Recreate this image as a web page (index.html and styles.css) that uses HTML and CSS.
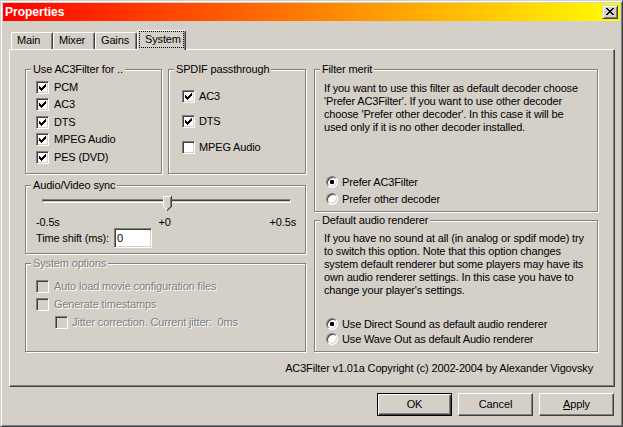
FILE: index.html
```html
<!DOCTYPE html>
<html>
<head>
<meta charset="utf-8">
<title>Properties</title>
<link rel="stylesheet" href="styles.css">
</head>
<body>
<div class="window">
  <div class="titlebar">
    <span class="title">Properties</span>
    <span class="close"><svg width="8" height="7" viewBox="0 0 8 7" shape-rendering="crispEdges"><path d="M0 0h2v1H0zM6 0h2v1H6zM1 1h2v1H1zM5 1h2v1H5zM2 2h4v1H2zM3 3h2v1H3zM2 4h4v1H2zM1 5h2v1H1zM5 5h2v1H5zM0 6h2v1H0zM6 6h2v1H6z"/></svg></span>
  </div>
  <div class="tabs">
    <div class="tab">Main</div>
    <div class="tab">Mixer</div>
    <div class="tab">Gains</div>
    <div class="tab sel"><span class="focus">System</span></div>
  </div>
  <div class="panel">
    <div class="cols">
      <div class="col col-left">
        <div class="row1">
          <div class="group g-use">
            <span class="legend">Use AC3Filter for ..</span>
            <div class="list list-use">
              <div class="check"><span class="cb"><svg width="7" height="7" viewBox="0 0 7 7" shape-rendering="crispEdges"><path d="M0 2v3h1v1h1v1h1v-1h1v-1h1v-1h1v-1h1v-3h-1v1h-1v1h-1v1h-1v1h-1v-1h-1v-1z"/></svg></span><span class="lbl">PCM</span></div>
              <div class="check"><span class="cb"><svg width="7" height="7" viewBox="0 0 7 7" shape-rendering="crispEdges"><path d="M0 2v3h1v1h1v1h1v-1h1v-1h1v-1h1v-1h1v-3h-1v1h-1v1h-1v1h-1v1h-1v-1h-1v-1z"/></svg></span><span class="lbl">AC3</span></div>
              <div class="check"><span class="cb"><svg width="7" height="7" viewBox="0 0 7 7" shape-rendering="crispEdges"><path d="M0 2v3h1v1h1v1h1v-1h1v-1h1v-1h1v-1h1v-3h-1v1h-1v1h-1v1h-1v1h-1v-1h-1v-1z"/></svg></span><span class="lbl">DTS</span></div>
              <div class="check"><span class="cb"><svg width="7" height="7" viewBox="0 0 7 7" shape-rendering="crispEdges"><path d="M0 2v3h1v1h1v1h1v-1h1v-1h1v-1h1v-1h1v-3h-1v1h-1v1h-1v1h-1v1h-1v-1h-1v-1z"/></svg></span><span class="lbl">MPEG Audio</span></div>
              <div class="check"><span class="cb"><svg width="7" height="7" viewBox="0 0 7 7" shape-rendering="crispEdges"><path d="M0 2v3h1v1h1v1h1v-1h1v-1h1v-1h1v-1h1v-3h-1v1h-1v1h-1v1h-1v1h-1v-1h-1v-1z"/></svg></span><span class="lbl">PES (DVD)</span></div>
            </div>
          </div>
          <div class="group g-spdif">
            <span class="legend">SPDIF passthrough</span>
            <div class="list list-spdif">
              <div class="check"><span class="cb"><svg width="7" height="7" viewBox="0 0 7 7" shape-rendering="crispEdges"><path d="M0 2v3h1v1h1v1h1v-1h1v-1h1v-1h1v-1h1v-3h-1v1h-1v1h-1v1h-1v1h-1v-1h-1v-1z"/></svg></span><span class="lbl">AC3</span></div>
              <div class="check"><span class="cb"><svg width="7" height="7" viewBox="0 0 7 7" shape-rendering="crispEdges"><path d="M0 2v3h1v1h1v1h1v-1h1v-1h1v-1h1v-1h1v-3h-1v1h-1v1h-1v1h-1v1h-1v-1h-1v-1z"/></svg></span><span class="lbl">DTS</span></div>
              <div class="check"><span class="cb"></span><span class="lbl">MPEG Audio</span></div>
            </div>
          </div>
        </div>
        <div class="group g-sync">
          <span class="legend">Audio/Video sync</span>
          <div class="slider">
            <div class="track"></div>
            <svg class="thumb" width="9" height="15" viewBox="0 0 9 15" shape-rendering="crispEdges">
              <path fill="#d4d0c8" d="M0 0H9V11H8V12H7V13H6V14H5V15H4V14H3V13H2V12H1V11H0Z"/>
              <path fill="#fff" d="M0 0h8v1H0zM0 1h1v10H0zM1 11h1v1H1zM2 12h1v1H2zM3 13h1v1H3z"/>
              <path fill="#808080" d="M7 1h1v10H7zM6 11h1v1H6zM5 12h1v1H5zM4 13h1v1H4z"/>
              <path fill="#404040" d="M8 0h1v11H8zM7 11h1v1H7zM6 12h1v1H6zM5 13h1v1H5zM4 14h1v1H4z"/>
            </svg>
          </div>
          <div class="ticks"><span>-0.5s</span><span>+0</span><span>+0.5s</span></div>
          <div class="timeshift"><span class="ts-lbl">Time shift (ms):</span><div class="textbox">0</div></div>
        </div>
        <div class="group g-sys disabled">
          <span class="legend">System options</span>
          <div class="list list-sys">
            <div class="check"><span class="cb"></span><span class="lbl">Auto load movie configuration files</span></div>
            <div class="check"><span class="cb"></span><span class="lbl">Generate timestamps</span></div>
            <div class="check sub"><span class="cb"></span><span class="lbl">Jitter correction. Current jitter:&nbsp; 0ms</span></div>
          </div>
        </div>
      </div>
      <div class="col col-right">
        <div class="group g-merit">
          <span class="legend">Filter merit</span>
          <p class="desc">If you want to use this filter as default decoder choose<br>'Prefer AC3Filter'. If you want to use other decoder<br>choose 'Prefer other decoder'. In this case it will be<br>used only if it is no other decoder installed.</p>
          <div class="radios">
            <div class="radio-row"><span class="radio on"></span><span class="lbl">Prefer AC3Filter</span></div>
            <div class="radio-row"><span class="radio"></span><span class="lbl">Prefer other decoder</span></div>
          </div>
        </div>
        <div class="group g-render">
          <span class="legend">Default audio renderer</span>
          <p class="desc">If you have no sound at all (in analog or spdif mode) try<br>to switch this option. Note that this option changes<br>system default renderer but some players may have its<br>own audio renderer settings. In this case you have to<br>change your player's settings.</p>
          <div class="radios">
            <div class="radio-row"><span class="radio on"></span><span class="lbl">Use Direct Sound as default audio renderer</span></div>
            <div class="radio-row"><span class="radio"></span><span class="lbl">Use Wave Out as default Audio renderer</span></div>
          </div>
        </div>
      </div>
    </div>
    <div class="copyright">AC3Filter v1.01a Copyright (c) 2002-2004 by Alexander Vigovsky</div>
  </div>
  <div class="buttons">
    <div class="btn default">OK</div>
    <div class="btn">Cancel</div>
    <div class="btn"><span><u>A</u>pply</span></div>
  </div>
</div>
</body>
</html>
```

FILE: styles.css
```css
* { box-sizing: border-box; }
html, body { margin: 0; padding: 0; }
body {
  background: #d4d0c8;
  font-family: "Liberation Sans", Arial, sans-serif;
  font-size: 11px;
  line-height: 13px;
  color: #000;
  letter-spacing: -0.15px;
}

.window {
  width: 623px;
  height: 427px;
  border: 1px solid;
  border-color: #d4d0c8 #404040 #404040 #d4d0c8;
  box-shadow: inset 1px 1px #fff, inset -1px -1px #808080;
  padding: 2px;
  display: flex;
  flex-direction: column;
}

/* title bar */
.titlebar {
  flex: none;
  height: 18px;
  background: linear-gradient(to right, #ff0000, #ffff00);
  display: flex;
  align-items: center;
  justify-content: space-between;
  padding: 0 2px;
}
.title {
  color: #fff;
  font-weight: bold;
  font-size: 12px;
  line-height: 14px;
  letter-spacing: 0;
}
.close {
  width: 16px;
  height: 14px;
  background: #d4d0c8;
  border: 1px solid;
  border-color: #d4d0c8 #404040 #404040 #d4d0c8;
  box-shadow: inset 1px 1px #fff, inset -1px -1px #808080;
  padding: 2px 0 0 3px;
}
.close svg { display: block; }

/* tabs */
.tabs {
  flex: none;
  display: flex;
  align-items: flex-start;
  height: 20px;
  margin: 9px 0 -1px;
  padding-left: 8px;
  position: relative;
  z-index: 1;
}
.tab {
  width: 42px;
  height: 17px;
  margin-top: 2px;
  border: 1px solid;
  border-bottom: 0;
  border-color: #fff #404040 #404040 #fff;
  border-radius: 2px 2px 0 0;
  box-shadow: inset -1px 0 #808080;
  padding-left: 5px;
  line-height: 15px;
  white-space: nowrap;
}
.tab.sel {
  width: 49px;
  height: 20px;
  margin-top: 0;
  padding: 0 1px;
  background: #d4d0c8;
}
.focus {
  display: block;
  height: 17px;
  border: 1px dotted #000;
  padding-left: 5px;
  line-height: 15px;
}

/* panel */
.panel {
  flex: none;
  height: 338px;
  margin: 0 5px 0 6px;
  border: 1px solid;
  border-color: #fff #404040 #404040 #fff;
  box-shadow: inset -1px -1px #808080;
  padding: 19px 0 0 15px;
  display: flex;
  flex-direction: column;
}
.cols { display: flex; gap: 8px; }
.col { display: flex; flex-direction: column; }
.col-left { width: 281px; }
.col-right { width: 284px; }
.row1 { display: flex; gap: 6px; }

/* group boxes */
.group {
  border: 1px solid #808080;
  box-shadow: inset 1px 1px #fff, 1px 1px #fff;
  display: flex;
  flex-direction: column;
}
.legend {
  align-self: flex-start;
  margin: -7px 0 0 5px;
  padding: 0 2px;
  line-height: 13px;
  background: #d4d0c8;
  white-space: nowrap;
}
.g-use { width: 137px; height: 105px; }
.g-spdif { width: 138px; height: 105px; }
.g-sync { margin-top: 11px; height: 69px; }
.g-sys { margin-top: 9px; height: 89px; }
.g-merit { height: 143px; padding-bottom: 3.5px; }
.g-render { margin-top: 8px; height: 132px; padding-bottom: 4.5px; }

/* checkboxes */
.check { display: flex; align-items: center; white-space: nowrap; }
.cb {
  flex: none;
  width: 13px;
  height: 13px;
  border: 1px solid;
  border-color: #808080 #fff #fff #808080;
  box-shadow: inset 1px 1px #404040, inset -1px -1px #d4d0c8;
  background: #fff;
  padding: 2px;
}
.cb svg { display: block; }
.list-use { padding-top: 2.5px; }
.list-use .check { height: 17.5px; padding-left: 10px; }
.list-use .lbl { margin-left: 5px; }
.list-spdif { padding-top: 7.25px; }
.list-spdif .check { height: 25.5px; padding-left: 13px; }
.list-spdif .lbl { margin-left: 4px; }
.list-sys { padding-top: 7px; }
.list-sys .check { height: 18px; padding-left: 10px; }
.list-sys .check.sub { padding-left: 29px; }
.list-sys .lbl { margin-left: 5px; }
.list-sys .sub .lbl { margin-left: 4px; }

.disabled .cb { background: #d4d0c8; }
.disabled .legend,
.disabled .lbl {
  color: #808080;
  text-shadow: 1px 1px 0 #fff;
}

/* slider */
.slider {
  position: relative;
  width: 249px;
  height: 15px;
  margin: 4px 0 0 16px;
}
.track {
  margin-top: 3px;
  height: 4px;
  border: 1px solid;
  border-color: #808080 #fff #fff #808080;
  box-shadow: inset 0 1px #404040;
  background: #d4d0c8;
}
.thumb {
  position: absolute;
  left: 121px;
  top: 0;
  display: block;
}
.ticks {
  display: flex;
  justify-content: space-between;
  margin-top: 5px;
  padding: 0 9px 0 10px;
  line-height: 12px;
}
.timeshift {
  display: flex;
  align-items: center;
  height: 20px;
  padding-left: 10px;
}
.ts-lbl { width: 78px; white-space: nowrap; }
.textbox {
  width: 38px;
  height: 20px;
  border: 1px solid;
  border-color: #808080 #fff #fff #808080;
  box-shadow: inset 1px 1px #404040, inset -1px -1px #d4d0c8;
  background: #fff;
  padding: 3px 0 0 2px;
  line-height: 13px;
}

/* descriptions and radios */
.desc {
  margin: 5.5px 0 0 9px;
  white-space: nowrap;
}
.g-render .desc { margin-top: 4.5px; }
.radios { margin-top: auto; padding-left: 11px; }
.radio-row { display: flex; align-items: center; height: 17px; white-space: nowrap; }
.g-render .radio-row { height: 15px; }
.radio-row .lbl { margin-left: 4px; }
.radio {
  flex: none;
  width: 12px;
  height: 12px;
  border-radius: 50%;
  border: 1px solid;
  border-color: #808080 #fff #fff #808080;
  box-shadow: inset 1px 1px #404040, inset -1px -1px #d4d0c8;
  background: #fff;
  display: flex;
  align-items: center;
  justify-content: center;
}
.radio.on::after {
  content: "";
  width: 4px;
  height: 4px;
  border-radius: 1px;
  background: #000;
}

/* footer */
.copyright {
  margin-top: 9.5px;
  padding-right: 21px;
  text-align: right;
  white-space: nowrap;
}
.buttons {
  flex: none;
  display: flex;
  justify-content: flex-end;
  gap: 6px;
  margin: 6px 6px 0 0;
}
.btn {
  width: 75px;
  height: 23px;
  border: 1px solid;
  border-color: #fff #404040 #404040 #fff;
  box-shadow: inset -1px -1px #808080;
  display: flex;
  align-items: center;
  justify-content: center;
}
.btn.default {
  border-color: #000;
  box-shadow: inset 1px 1px #fff, inset -1px -1px #404040, inset -2px -2px #808080;
}
```
